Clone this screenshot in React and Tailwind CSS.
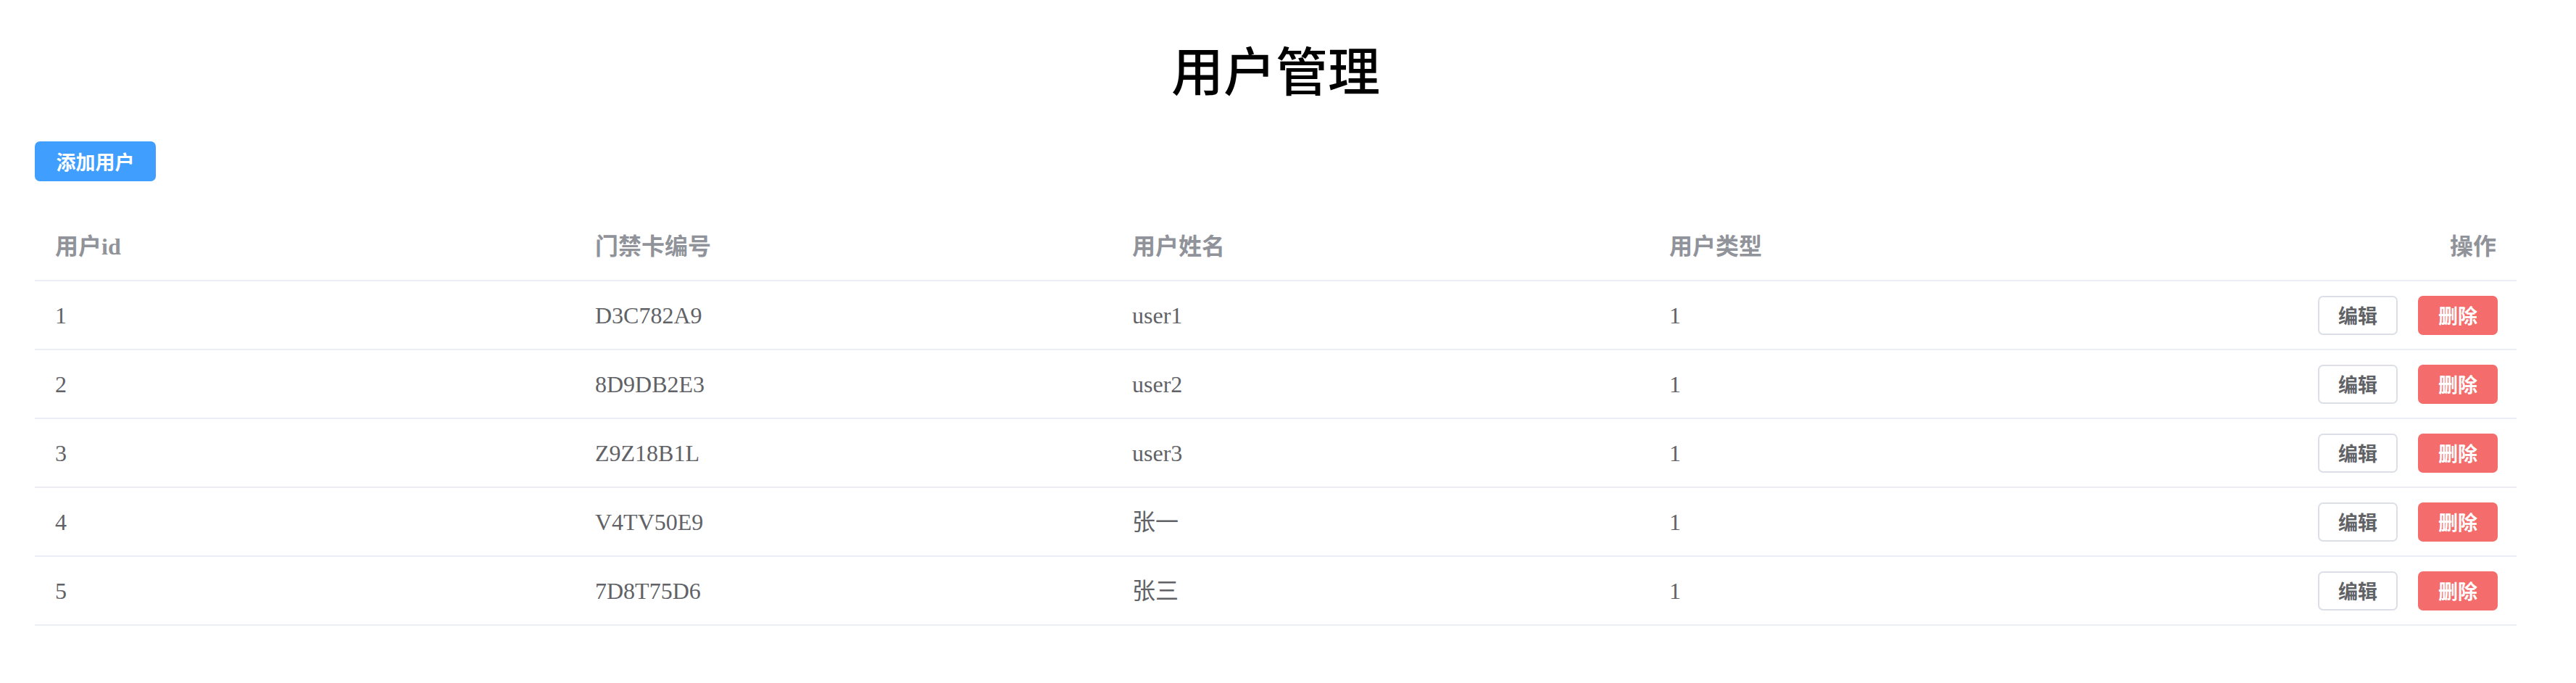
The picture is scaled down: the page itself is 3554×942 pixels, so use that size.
import React from "react";

const USERS = [
  { id: 1, card: "D3C782A9", name: "user1", type: 1 },
  { id: 2, card: "8D9DB2E3", name: "user2", type: 1 },
  { id: 3, card: "Z9Z18B1L", name: "user3", type: 1 },
  { id: 4, card: "V4TV50E9", name: "张一", type: 1 },
  { id: 5, card: "7D8T75D6", name: "张三", type: 1 },
];

const COLS = "grid grid-cols-[745px_741px_741px_744px_453px]";
const SERIF = "font-['Liberation_Serif','Noto_Sans_CJK_SC',serif]";
const SANS = "font-['Noto_Sans_CJK_SC','Liberation_Sans',sans-serif]";

const App = () => {
  return (
    <div className="bg-white pr-[34px] pt-[58px]">
      <div className="ml-[48px] w-[3424px]">
        <h1 className={`text-center text-[72px] leading-[72px] font-medium text-black ${SANS}`}>
          用户管理
        </h1>

        <button
          className={`mt-[65px] h-[55px] w-[167px] rounded-[7px] bg-[#409eff] text-[27px] leading-none font-semibold text-white ${SANS}`}
        >
          添加用户
        </button>

        <div className={`mt-[43px] ${SERIF} text-[32px]`}>
          {/* header */}
          <div className={`${COLS} h-[95px] border-b-2 border-[#ebeef5] items-center font-bold text-[#909399]`}>
            <div className="pl-[28px]">用户id</div>
            <div className="pl-[28px]">门禁卡编号</div>
            <div className="pl-[28px]">用户姓名</div>
            <div className="pl-[28px]">用户类型</div>
            <div className="pr-[28px] text-right">操作</div>
          </div>

          {USERS.map((u) => (
            <div
              key={u.id}
              className={`${COLS} h-[95px] border-b-2 border-[#ebeef5] items-center text-[#606266]`}
            >
              <div className="pl-[28px]">{u.id}</div>
              <div className="pl-[28px]">{u.card}</div>
              <div className="pl-[28px]">{u.name}</div>
              <div className="pl-[28px]">{u.type}</div>
              <div className={`flex justify-end gap-[28px] pr-[26px] ${SANS}`}>
                <button className="h-[54px] w-[110px] rounded-[7px] border-2 border-[#dcdfe6] bg-white text-[27px] leading-none font-semibold text-[#606266]">
                  编辑
                </button>
                <button className="h-[54px] w-[110px] rounded-[7px] bg-[#f56c6c] text-[27px] leading-none font-semibold text-white">
                  删除
                </button>
              </div>
            </div>
          ))}
        </div>
      </div>
    </div>
  );
};

export default App;
